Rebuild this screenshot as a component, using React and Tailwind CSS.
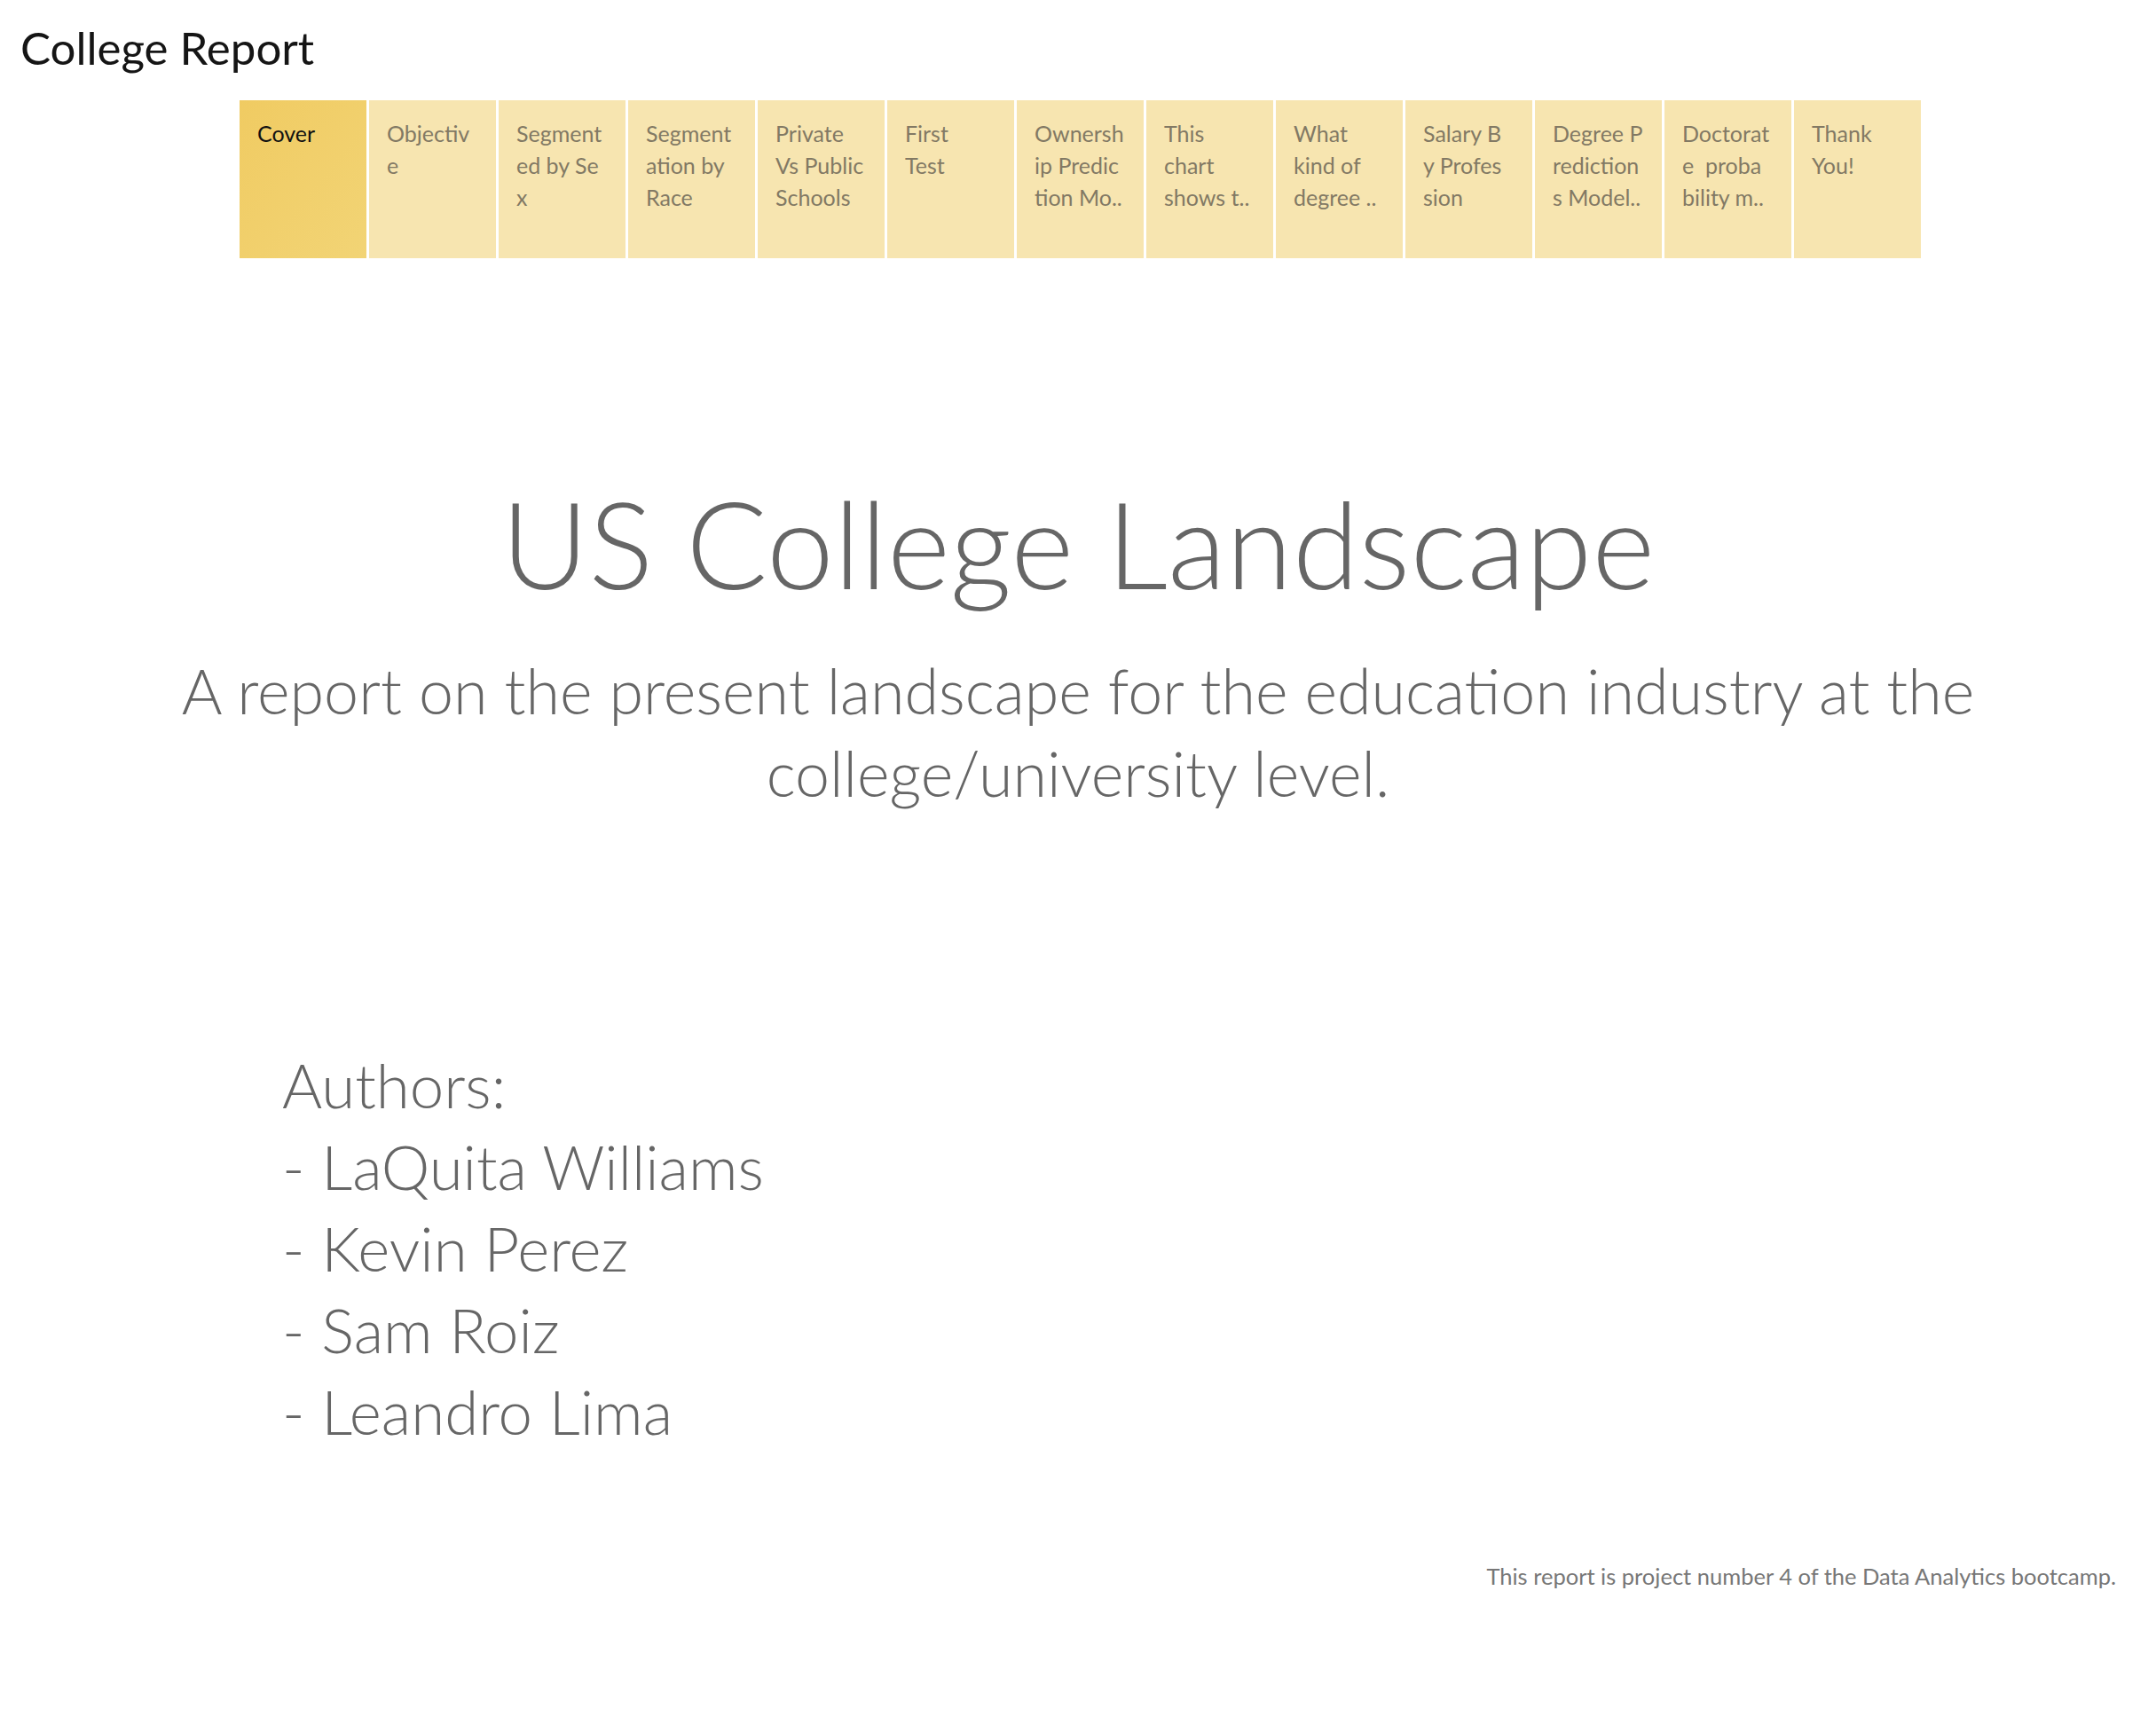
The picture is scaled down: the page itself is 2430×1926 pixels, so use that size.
import React from 'react';

const tabs = [
  { lines: ['Cover'], active: true },
  { lines: ['Objectiv', 'e'] },
  { lines: ['Segment', 'ed by Se', 'x'] },
  { lines: ['Segment', 'ation by', 'Race'] },
  { lines: ['Private', 'Vs Public', 'Schools'] },
  { lines: ['First', 'Test'] },
  { lines: ['Ownersh', 'ip Predic', 'tion Mo..'] },
  { lines: ['This', 'chart', 'shows t..'] },
  { lines: ['What', 'kind of', 'degree ..'] },
  { lines: ['Salary B', 'y Profes', 'sion'] },
  { lines: ['Degree P', 'rediction', 's Model..'] },
  { lines: ['Doctorat', 'e  proba', 'bility m..'] },
  { lines: ['Thank', 'You!'] },
];

const authors = ['Authors:', '- LaQuita Williams', '- Kevin Perez', '- Sam Roiz', '- Leandro Lima'];

const Tab = ({ lines, active }) => (
  <div
    className={`w-[143px] h-[178px] shrink-0 pl-[20px] pt-[19px] ${
      active ? 'bg-gradient-to-br from-[#f0cb62] to-[#f2d475] text-[#111111]' : 'bg-[#f7e5b0] text-[#827964]'
    }`}
  >
    {lines.map((l, i) => (
      <div key={i} className="text-[25px] leading-[36px] whitespace-pre">
        {l}
      </div>
    ))}
  </div>
);

const App = () => {
  return (
    <div
      className="w-[2430px] h-[1926px] bg-white flex flex-col overflow-hidden"
      style={{ fontFamily: 'Lato, "Open Sans", sans-serif' }}
    >
      <div className="pl-[23px] pt-[30px] text-[51px] leading-[48px] text-[#151515]">College Report</div>

      <div className="flex gap-[3px] ml-[270px] mt-[35px]">
        {tabs.map((t, i) => (
          <Tab key={i} {...t} />
        ))}
      </div>

      <div className="mt-[241px] text-center text-[136px] leading-[160px] font-light text-[#666666]">
        US College Landscape
      </div>

      <div className="mt-[40px] mx-auto w-[2250px] text-center text-[70px] leading-[93px] font-light text-[#666666]">
        A report on the present landscape for the education industry at the
        <br />
        college/university level.
      </div>

      <div className="mt-[259px] pl-[318px] flex flex-col text-[69px] leading-[92px] font-light text-[#666666]">
        {authors.map((a) => (
          <div key={a}>{a}</div>
        ))}
      </div>

      <div className="mt-[124px] pr-[45px] text-right text-[25.5px] leading-[30px] text-[#777777]">
        This report is project number 4 of the Data Analytics bootcamp.
      </div>
    </div>
  );
};

export default App;
